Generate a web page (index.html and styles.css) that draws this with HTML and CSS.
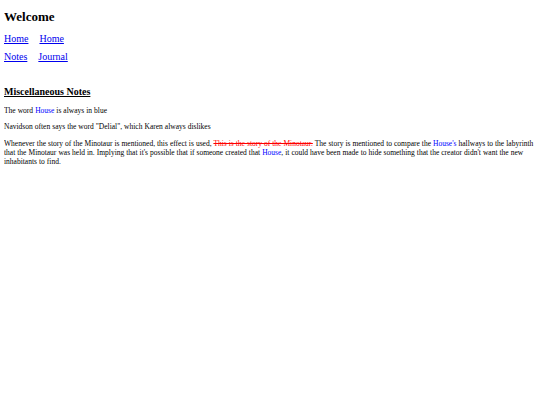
FILE: index.html
```html
<!DOCTYPE html>
<html>
<head>
<meta charset="utf-8">
<title>Welcome</title>
<link rel="stylesheet" href="styles.css">
</head>
<body>
<h1 class="title">Welcome</h1>
<nav class="nav">
  <div class="nav-row"><a href="#">Home</a><a href="#">Home</a></div>
  <div class="nav-row"><a href="#">Notes</a><a href="#">Journal</a></div>
</nav>
<h2 class="section">Miscellaneous Notes</h2>
<p class="note">The word <span class="house">House</span> is always in blue</p>
<p class="note tight">Navidson often says the word "Delial", which Karen always dislikes</p>
<p class="note">Whenever the story of the Minotaur is mentioned, this effect is used, <span class="struck">This is the story of the Minotaur.</span> The story is mentioned to compare the <span class="house">House's</span> hallways to the labyrinth that the Minotaur was held in. Implying that it's possible that if someone created that <span class="house">House</span>, it could have been made to hide something that the creator didn't want the new inhabitants to find.</p>
</body>
</html>
```

FILE: styles.css
```css
html, body {
  background: #ffffff;
}
body {
  margin: 4px;
  font-family: "Liberation Serif", "Times New Roman", serif;
  color: #000000;
}
.title {
  font-size: 13px;
  font-weight: bold;
  margin: 5px 0 0 0;
  line-height: 15px;
}
.nav {
  margin-top: 9px;
  display: flex;
  flex-direction: column;
  gap: 7px;
}
.nav-row {
  display: flex;
  gap: 11px;
  font-size: 10px;
  line-height: 11px;
}
.nav-row a {
  color: #0000ee;
  text-decoration: underline;
}
.section {
  font-size: 10px;
  font-weight: bold;
  text-decoration: underline;
  margin: 24px 0 0 0;
  line-height: 12px;
}
.note {
  font-size: 7.5px;
  line-height: 9px;
  word-spacing: 0.15px;
  margin: 8px 0 0 0;
}
.note.tight {
  margin-top: 7px;
}
.house {
  color: #0000ff;
}
.struck {
  color: #ff0000;
  text-decoration: line-through;
}
```
